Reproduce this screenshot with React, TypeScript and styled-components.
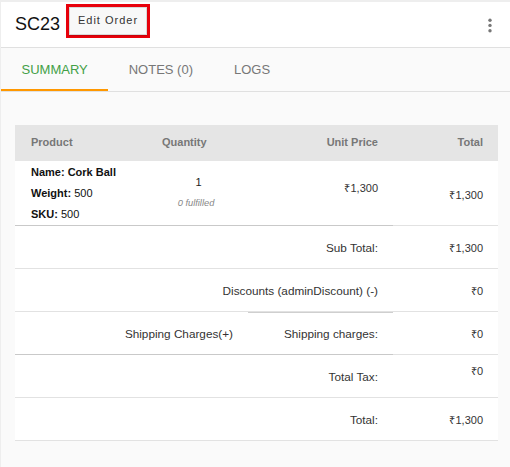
import React from "react";
import styled, { createGlobalStyle } from "styled-components";

const Global = createGlobalStyle`
  html, body { margin: 0; padding: 0; background: #eeeeee; }
  body { font-family: "Liberation Sans", Arial, sans-serif; }
  * { box-sizing: border-box; }
`;

const Card = styled.div`
  margin: 2px 0 0 1px;
  min-height: 465px;
  background: #fafafa;
  display: flex;
  flex-direction: column;
`;

const Header = styled.div`
  height: 46px;
  background: #fff;
  border-bottom: 1px solid #e0e0e0;
  display: flex;
  align-items: flex-start;
  padding: 0 17px 0 14px;
`;

const Title = styled.h1`
  margin: 12px 0 0 0;
  font-size: 18px;
  line-height: 21px;
  font-weight: 400;
  color: #111;
`;

const Highlight = styled.div`
  margin: 2px 0 0 6px;
  border: 3px solid #e8000b;
`;

const EditButton = styled.button`
  width: 78px;
  height: 28px;
  margin: 0;
  padding: 0 0 2px 0;
  border: 1px solid #d8d8d8;
  background: #f8f8f8;
  box-shadow: 0 1px 1px rgba(0, 0, 0, 0.12);
  font-family: "Liberation Sans", Arial, sans-serif;
  font-size: 11px;
  letter-spacing: 1px;
  color: #333;
`;

const Spacer = styled.div`
  flex: 1;
`;

const MenuButton = styled.div`
  margin-top: 15px;
  width: 6px;
  display: flex;
  justify-content: center;
`;

const TabBar = styled.div`
  display: flex;
  height: 44px;
  border-bottom: 1px solid #e0e0e0;
  background: #fafafa;
`;

const Tab = styled.div<{ $active?: boolean }>`
  height: 43px;
  padding: 2px 20.5px 0;
  display: flex;
  align-items: center;
  font-size: 13px;
  color: ${(p) => (p.$active ? "#43a047" : "#777")};
  border-bottom: 2px solid ${(p) => (p.$active ? "#ff9800" : "transparent")};
`;

const Content = styled.div`
  padding: 33px 12px 27px 14px;
`;

const Table = styled.div`
  display: grid;
  grid-template-columns: 133px 100px 145px 105px;
  background: #fff;
`;

const HeadCell = styled.div<{ $align?: string; $pl?: number }>`
  height: 36px;
  background: #e5e5e5;
  display: flex;
  align-items: center;
  justify-content: ${(p) => p.$align || "flex-start"};
  padding: 0 15px 2px ${(p) => p.$pl ?? 16}px;
  font-size: 11px;
  font-weight: 700;
  color: #777;
`;

const Cell = styled.div<{
  $line?: "dark" | "light";
  $topDark?: boolean;
  $span?: number;
  $align?: string;
  $valign?: string;
  $pt?: number;
  $pb?: number;
  $h?: number;
  $label?: boolean;
}>`
  grid-column: span ${(p) => p.$span || 1};
  height: ${(p) => p.$h || 43}px;
  border-bottom: 1px solid ${(p) => (p.$line === "dark" ? "#c9c9c9" : "#e2e2e2")};
  box-shadow: ${(p) => (p.$topDark ? "inset 0 1px 0 #cfcfcf" : "none")};
  display: flex;
  flex-direction: column;
  justify-content: ${(p) => p.$valign || "center"};
  align-items: ${(p) => p.$align || "flex-end"};
  padding: ${(p) => p.$pt ?? 0}px 15px ${(p) => p.$pb ?? 0}px 16px;
  font-size: ${(p) => (p.$label ? "11.75px" : "11px")};
  color: #333;
`;

const ProductLine = styled.div`
  line-height: 21px;
  color: #111;
  b { font-weight: 700; }
`;

const Qty = styled.div`
  line-height: 21px;
  font-size: 11px;
  color: #222;
  text-align: center;
`;

const Fulfilled = styled.div`
  line-height: 21px;
  font-size: 9.3px;
  font-style: italic;
  color: #888;
  text-align: center;
  margin-right: 5px;
`;

const Kebab = () => (
  <svg width="6" height="16" viewBox="0 0 6 16">
    <circle cx="3" cy="3.2" r="1.7" fill="#777" />
    <circle cx="3" cy="8.4" r="1.7" fill="#777" />
    <circle cx="3" cy="13.8" r="1.7" fill="#777" />
  </svg>
);

export default function App() {
  return (
    <>
      <Global />
      <Card>
        <Header>
          <Title>SC23</Title>
          <Highlight>
            <EditButton>Edit Order</EditButton>
          </Highlight>
          <Spacer />
          <MenuButton>
            <Kebab />
          </MenuButton>
        </Header>
        <TabBar>
          <Tab $active>SUMMARY</Tab>
          <Tab>NOTES (0)</Tab>
          <Tab>LOGS</Tab>
        </TabBar>
        <Content>
          <Table>
            <HeadCell>Product</HeadCell>
            <HeadCell $pl={14}>Quantity</HeadCell>
            <HeadCell $align="flex-end">Unit Price</HeadCell>
            <HeadCell $align="flex-end">Total</HeadCell>

            <Cell $h={65} $line="dark" $align="flex-start" $valign="flex-start" $pt={1}>
              <ProductLine><b>Name: Cork Ball</b></ProductLine>
              <ProductLine><b>Weight:</b> 500</ProductLine>
              <ProductLine><b>SKU:</b> 500</ProductLine>
            </Cell>
            <Cell $h={65} $line="dark" $align="center" $valign="flex-start" $pt={11}>
              <Qty>1</Qty>
              <Fulfilled>0 fulfilled</Fulfilled>
            </Cell>
            <Cell $h={65} $line="dark" $valign="flex-start" $pt={19}>
              ₹1,300
            </Cell>
            <Cell $h={65} $pt={2}>₹1,300</Cell>

            <Cell $span={3} $label>Sub Total:</Cell>
            <Cell>₹1,300</Cell>

            <Cell $span={3} $label>Discounts (adminDiscount) (-)</Cell>
            <Cell>₹0</Cell>

            <Cell $span={2} $line="dark" $label>Shipping Charges(+)</Cell>
            <Cell $line="dark" $topDark $label>Shipping charges:</Cell>
            <Cell>₹0</Cell>

            <Cell $span={3} $label>Total Tax:</Cell>
            <Cell $pb={11}>₹0</Cell>

            <Cell $span={3} $label>Total:</Cell>
            <Cell>₹1,300</Cell>
          </Table>
        </Content>
      </Card>
    </>
  );
}
